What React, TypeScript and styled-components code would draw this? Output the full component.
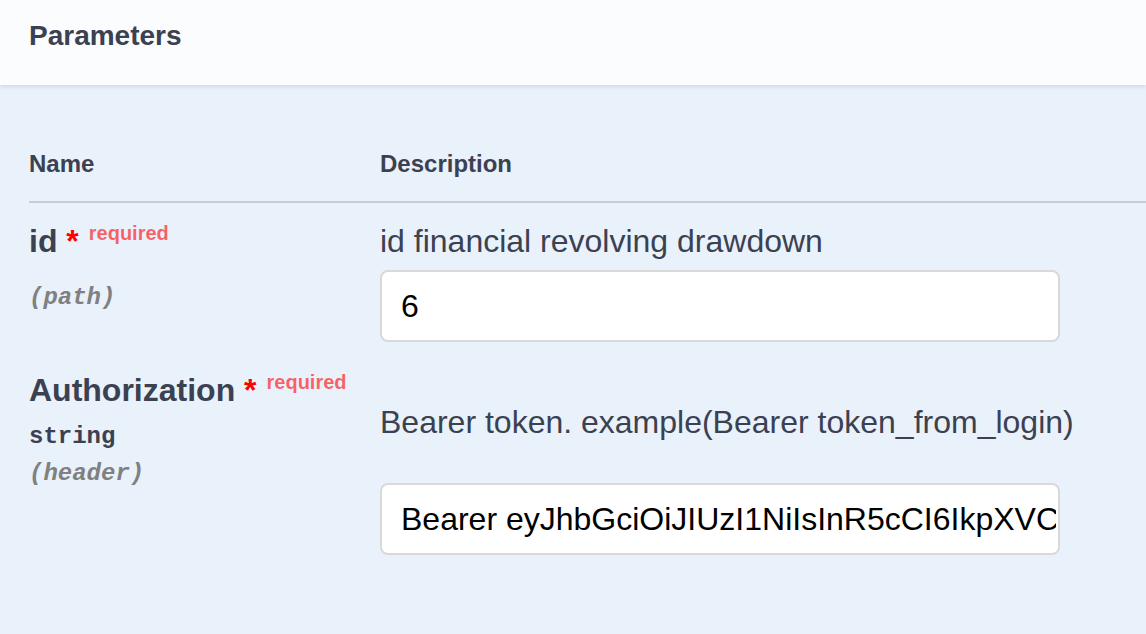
import React from "react";
import styled, { createGlobalStyle } from "styled-components";

const Global = createGlobalStyle`
  html, body {
    margin: 0;
    padding: 0;
    background: #e9f1fb;
  }
  body {
    font-family: "Liberation Sans", Arial, Helvetica, sans-serif;
    color: #3b4151;
    overflow: hidden;
  }
`;

const Section = styled.section`
  min-height: 634px;
  background: #e9f1fb;
`;

const SectionHeader = styled.header`
  position: relative;
  z-index: 1;
  box-sizing: border-box;
  height: 85px;
  padding: 20px 29px 0;
  background: #fafcfe;
  box-shadow: 0 2px 4px rgba(0, 0, 0, 0.1);
`;

const Title = styled.h4`
  margin: 0;
  font-size: 28px;
  line-height: 32px;
  font-weight: 700;
  color: #3b4151;
`;

const Body = styled.div`
  padding: 41px 0 0 29px;
`;

const Table = styled.div`
  display: grid;
  grid-template-columns: 351px 1fr;
`;

const HeadCell = styled.div`
  padding: 24px 0 23px;
  font-size: 24px;
  line-height: 28px;
  font-weight: 700;
  color: #3b4151;
  border-bottom: 2px solid rgba(59, 65, 81, 0.2);
`;

const Cell = styled.div`
  display: flex;
  flex-direction: column;
  align-items: flex-start;
  padding: 20px 0 10px;
`;

const ParamName = styled.div`
  font-size: 32px;
  line-height: 37px;
  font-weight: 700;
  color: #3b4151;
  white-space: nowrap;
`;

const Star = styled.span`
  color: red;
`;

const Required = styled.span`
  position: relative;
  top: -12px;
  padding: 0 10px;
  font-size: 20px;
  font-weight: 700;
  color: rgba(255, 0, 0, 0.6);
`;

const Mono = styled.div`
  font-family: "Liberation Mono", "Courier New", monospace;
  font-size: 24px;
  line-height: 27px;
  font-weight: 700;
`;

const ParamType = styled(Mono)`
  padding: 10px 0;
  color: #3b4151;
`;

const ParamIn = styled(Mono)`
  font-style: italic;
  color: gray;
`;

const Markdown = styled.p<{ $spaced?: boolean }>`
  margin: ${(p) => (p.$spaced ? "32px 0" : "0")};
  font-size: 32px;
  line-height: 37px;
  color: #3b4151;
  white-space: nowrap;
`;

const TextInput = styled.input`
  display: block;
  box-sizing: border-box;
  width: 680px;
  height: 72px;
  margin: 10px 0 0;
  padding: 0 2px 0 19px;
  border: 2px solid #d9d9d9;
  border-radius: 8px;
  background: #fff;
  font-family: "Liberation Sans", Arial, Helvetica, sans-serif;
  font-size: 32px;
  color: #000;
  outline: none;
`;

type Param = {
  name: string;
  type?: string;
  location: string;
  description: string;
  value: string;
  spaced?: boolean;
};

const params: Param[] = [
  {
    name: "id",
    location: "(path)",
    description: "id financial revolving drawdown",
    value: "6",
  },
  {
    name: "Authorization",
    type: "string",
    location: "(header)",
    description: "Bearer token. example(Bearer token_from_login)",
    value:
      "Bearer eyJhbGciOiJIUzI1NiIsInR5cCI6IkpXVCJ9.eyJzdWIiOiIxMjM0NTY3ODkwIn0.token",
    spaced: true,
  },
];

export default function App() {
  return (
    <>
      <Global />
      <Section>
        <SectionHeader>
          <Title>Parameters</Title>
        </SectionHeader>
        <Body>
          <Table>
            <HeadCell>Name</HeadCell>
            <HeadCell>Description</HeadCell>
            {params.map((p) => (
              <React.Fragment key={p.name}>
                <Cell>
                  <ParamName>
                    {p.name}
                    <Star>&nbsp;*</Star>
                    <Required>required</Required>
                  </ParamName>
                  <ParamType>{p.type ?? ""}</ParamType>
                  <ParamIn>{p.location}</ParamIn>
                </Cell>
                <Cell>
                  <Markdown $spaced={p.spaced}>{p.description}</Markdown>
                  <TextInput type="text" defaultValue={p.value} />
                </Cell>
              </React.Fragment>
            ))}
          </Table>
        </Body>
      </Section>
    </>
  );
}
